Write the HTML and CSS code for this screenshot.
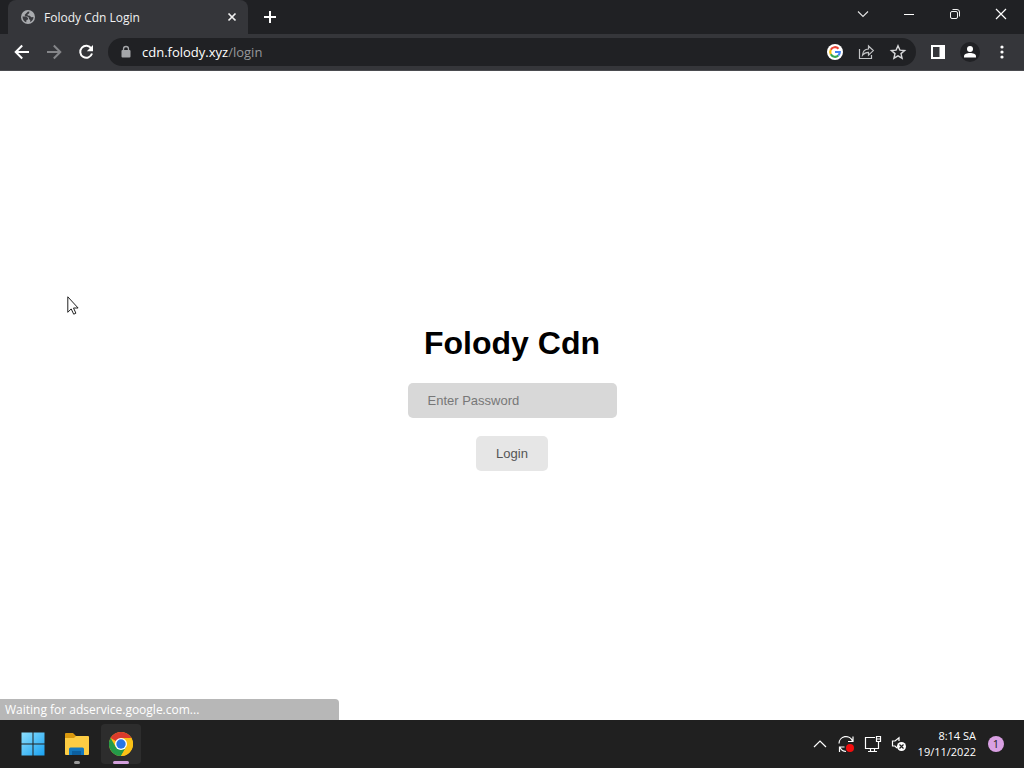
FILE: index.html
```html
<!DOCTYPE html>
<html lang="en">
<head>
<meta charset="utf-8">
<title>Folody Cdn Login</title>
<link rel="stylesheet" href="styles.css">
</head>
<body>
<header class="browser">
  <div class="tabstrip">
    <div class="tab">
      <svg class="favicon" width="16" height="16" viewBox="0 0 16 16"><circle cx="8" cy="8" r="7" fill="#a9abae"/><path d="M2.500 7.500l3.500 0 2 1.500 0 1.500-1.500.5-.3 2.200C4 12.500 2.500 10.500 2.500 7.500zM8 2.500l1.500.3-.5 1.700-1.500.8.3 1.200 2 .3 1.500 1.500 2.200-.3c0 2.300-1.300 4.200-3.500 5l.3-2-1.500-1 .3-1.300-1.800-1.200-1.800-.2L4.500 6z" fill="#3a3b3f"/></svg>
      <span class="tab-title">Folody Cdn Login</span>
      <button class="icon-button tab-close" aria-label="Close tab"><svg width="16" height="16" viewBox="0 0 16 16" stroke="#f1f1f1" stroke-width="1.700"><path d="m4.500 4.500 7 7M11.500 4.500l-7 7"/></svg></button>
    </div>
    <button class="icon-button new-tab" aria-label="New tab"><svg width="16" height="16" viewBox="0 0 16 16" stroke="#fff" stroke-width="2"><path d="M8 2v12M2 8h12"/></svg></button>
    <div class="window-controls">
      <button class="icon-button" aria-label="Search tabs"><svg width="16" height="16" viewBox="0 0 16 16" fill="none" stroke="#e4e4e4" stroke-width="1.100"><path d="m3 5.500 5 5 5-5"/></svg></button>
      <button class="icon-button" aria-label="Minimize"><svg width="16" height="16" viewBox="0 0 16 16" fill="none" stroke="#fff"><path d="M3 8.500h10"/></svg></button>
      <button class="icon-button" aria-label="Restore"><svg width="16" height="16" viewBox="0 0 16 16" fill="none" stroke="#f1f1f1"><rect x="3.500" y="5.500" width="7" height="7" rx="1.500"/><path d="M5.500 3.500H10A2.500 2.500 0 0 1 12.500 6v4.500"/></svg></button>
      <button class="icon-button" aria-label="Close"><svg width="16" height="16" viewBox="0 0 16 16" fill="none" stroke="#fff" stroke-width="1.200"><path d="m3 3 10 10M13 3 3 13"/></svg></button>
    </div>
  </div>
  <div class="toolbar">
    <button class="icon-button" aria-label="Back"><svg width="20" height="20" viewBox="0 0 20 20" fill="none" stroke="#fff" stroke-width="2"><path d="M17 10H4M10.200 3.500 3.700 10l6.500 6.500"/></svg></button>
    <button class="icon-button" aria-label="Forward"><svg width="20" height="20" viewBox="0 0 20 20" fill="none" stroke="#858689" stroke-width="2"><path d="M3 10h13M9.800 3.500l6.500 6.500-6.500 6.500"/></svg></button>
    <button class="icon-button" aria-label="Reload"><svg width="20" height="20" viewBox="0 0 20 20"><path d="M15.300 6.500A6 6 0 1 0 16 11.500" fill="none" stroke="#fff" stroke-width="2"/><path d="M17 3v6.200h-6.200z" fill="#fff"/></svg></button>
    <div class="omnibox">
      <svg width="12" height="14" viewBox="0 0 12 14"><rect x="1.500" y="5" width="9" height="7.500" rx="1" fill="#a5a7aa"/><path d="M3.500 5.500V4a2.500 2.500 0 0 1 5 0v1.500" fill="none" stroke="#a5a7aa" stroke-width="1.300"/></svg>
      <span class="url">cdn.folody.xyz<span class="url-path">/login</span></span>
      <div class="omnibox-actions">
        <button class="icon-button" aria-label="Search with Google"><svg width="16" height="16" viewBox="0 0 16 16"><circle cx="8" cy="8" r="8" fill="#fff"/><g fill="none" stroke-width="2.200"><path d="M11.500 4.700A4.800 4.800 0 0 0 3.800 5.700" stroke="#ea4335"/><path d="M3.800 5.700a4.800 4.800 0 0 0 0 4.600" stroke="#fbbc05"/><path d="M3.800 10.300a4.800 4.800 0 0 0 7.500 1.200" stroke="#34a853"/><path d="M8 8h4.800A4.800 4.800 0 0 1 11.300 11.500" stroke="#4285f4"/></g></svg></button>
        <button class="icon-button" aria-label="Share"><svg width="18" height="18" viewBox="0 0 18 18" fill="none" stroke="#c2c3c5" stroke-width="1.200"><path d="M2.500 6v9.500h12V12"/><path d="M5.500 12.200c.3-4 2.500-6 6-6.200V3l4.800 4.600-4.800 4.600V9.300c-2.700 0-4.500.900-6 2.900z"/></svg></button>
        <button class="icon-button" aria-label="Bookmark"><svg width="18" height="18" viewBox="0 0 18 18" fill="none" stroke="#d7d8da" stroke-width="1.400"><path d="m9 2.800 1.900 4.300 4.700.4-3.600 3.100 1.100 4.600L9 12.800l-4.100 2.400L6 10.600 2.400 7.500l4.700-.4z"/></svg></button>
      </div>
    </div>
    <button class="icon-button" aria-label="Side panel"><svg width="16" height="16" viewBox="0 0 16 16"><path d="M1 1h14v14H1zM3 3v10h6.500V3z" fill="#fff" fill-rule="evenodd"/></svg></button>
    <button class="icon-button profile" aria-label="Profile"><svg width="16" height="16" viewBox="0 0 16 16" fill="#fff"><circle cx="8" cy="5" r="3"/><path d="M2 13.500v-1.200C2 10 5 9 8 9s6 1 6 3.300v1.200z"/></svg></button>
    <button class="icon-button" aria-label="Menu"><svg width="16" height="16" viewBox="0 0 16 16" fill="#fff"><circle cx="8" cy="3" r="1.600"/><circle cx="8" cy="8" r="1.600"/><circle cx="8" cy="13" r="1.600"/></svg></button>
  </div>
</header>
<main class="page">
  <form class="login">
    <h1 class="heading">Folody Cdn</h1>
    <input class="password" type="password" placeholder="Enter Password" aria-label="Enter Password">
    <button class="submit" type="button">Login</button>
  </form>
  <svg class="pointer" width="13" height="20" viewBox="0 0 13 20"><path d="M.8.800v15.500l3.400-3.400 2.500 5.300 2.200-1-2.400-5.200h4.600z" fill="#fff" stroke="#222"/></svg>
  <div class="status">Waiting for adservice.google.com...</div>
</main>
<footer class="taskbar">
  <div class="apps">
    <button class="app" aria-label="Start"><svg width="24" height="24" viewBox="0 0 24 24"><defs><linearGradient id="win" x1="0" y1="0" x2="24" y2="24" gradientUnits="userSpaceOnUse"><stop stop-color="#8fe0fd"/><stop offset="1" stop-color="#16a0f2"/></linearGradient></defs><path d="M.5.500h11v11H.5zM12.500.500h11v11h-11zM.5 12.500h11v11H.5zM12.500 12.500h11v11h-11z" fill="url(#win)"/></svg></button>
    <button class="app open" aria-label="File Explorer"><svg width="26" height="24" viewBox="0 0 26 24"><path d="M1 2q0-1 1-1h7l3 3v5H1z" fill="#d9980e"/><path d="M1 6h9l2-2h12q1 0 1 1v17q0 1-1 1H2q-1 0-1-1z" fill="#fccc43"/><path d="M5 23v-6q0-1.500 1.500-1.500h12Q20 15.500 20 17v6z" fill="#1478bd"/><path d="M8 19h9v4H8z" fill="#0c5f9f"/></svg></button>
    <button class="app active" aria-label="Google Chrome"><svg width="24" height="24" viewBox="0 0 24 24"><circle cx="12" cy="12" r="12" fill="#fbc116"/><path d="M12 12 1.600 6A12 12 0 0 1 22.400 6H12z" fill="#db3b2c"/><path d="M1.600 6A12 12 0 0 0 12 24l5.200-9L12 12l-5.200 3z" fill="#249a49"/><path d="M12 6h10.400A12 12 0 0 1 12 24l5.200-9z" fill="#fbc116"/><circle cx="12" cy="12" r="6" fill="#fff"/><circle cx="12" cy="12" r="4.700" fill="#2875e6"/></svg></button>
  </div>
  <div class="tray">
    <button class="icon-button" aria-label="Show hidden icons"><svg width="16" height="16" viewBox="0 0 16 16" fill="none" stroke="#fff" stroke-width="1.200"><path d="m2 11 6-6 6 6"/></svg></button>
    <button class="icon-button" aria-label="Updates"><svg width="18" height="18" viewBox="0 0 18 18" fill="none" stroke="#fff" stroke-width="1.200"><path d="M2 8.500A7 7 0 0 1 15.500 6M16 1.500V6.500h-5M2.500 17v-5h5M3 12.500a7 7 0 0 0 6 4"/><circle cx="13" cy="13" r="4" fill="#f20d0d" stroke="none"/></svg></button>
    <button class="icon-button" aria-label="Network"><svg width="18" height="18" viewBox="0 0 18 18" fill="none" stroke="#fff" stroke-width="1.200"><path d="M11 2.500H1.500v11h13V9M4 16.500h9M6.500 13.500v3M10.500 13.500v3M12.500 1.500h4v5h-4zM14.500 6.500V9M12.500 4h4"/></svg></button>
    <button class="icon-button" aria-label="Sound muted"><svg width="16" height="16" viewBox="0 0 16 16"><path d="M8 5V1.700L4 5H1.500v5H4l2 2" fill="none" stroke="#fff" stroke-width="1.200"/><circle cx="10.500" cy="10.500" r="4.500" fill="#fff"/><path d="m8.500 8.500 4 4m0-4-4 4" stroke="#202020" stroke-width="1.200"/></svg></button>
    <div class="clock"><time>8:14 SA</time><time>19/11/2022</time></div>
    <span class="badge">1</span>
  </div>
</footer>
</body>
</html>
```
FILE: styles.css
```css
* { box-sizing: border-box; }

body {
  margin: 0;
  min-height: 100vh;
  display: flex;
  flex-direction: column;
  background: #fff;
  font-family: "Open Sans", "Noto Sans", sans-serif;
}

button, input { border: 0; margin: 0; }
svg { display: block; flex: none; }

.icon-button {
  display: flex;
  align-items: center;
  justify-content: center;
  padding: 0;
  background: none;
}

.browser { background: #202124; }

.tabstrip {
  display: flex;
  align-items: center;
  height: 34px;
  padding-left: 8px;
}

.tab {
  display: flex;
  align-items: center;
  gap: 8px;
  width: 240px;
  height: 34px;
  padding: 0 8px 0 12px;
  border-radius: 8px 8px 0 0;
  background: #35363a;
  color: #f1f1f1;
  font-size: 12px;
}

.tab-title { flex: 1; }
.new-tab { margin-left: 14px; }

.window-controls {
  display: flex;
  margin-left: auto;
  height: 28px;
  align-self: flex-start;
}

.window-controls .icon-button { width: 46px; }

.toolbar {
  display: flex;
  align-items: center;
  gap: 12px;
  height: 37px;
  padding: 0 12px;
  border-bottom: 1px solid #4a4b4f;
  background: #35363a;
}

.omnibox {
  flex: 1;
  display: flex;
  align-items: center;
  gap: 10px;
  height: 28px;
  padding: 0 9px 0 12px;
  border-radius: 14px;
  background: #202124;
}

.url {
  color: #fff;
  font-size: 13px;
}

.url-path { color: #96989b; }

.omnibox-actions {
  display: flex;
  align-items: center;
  gap: 14px;
  margin-left: auto;
}

.toolbar > .icon-button:nth-last-child(-n+3) { width: 20px; height: 20px; }
.profile { border-radius: 50%; background: #202124; }

.page {
  position: relative;
  flex: 1;
  display: flex;
  align-items: center;
  justify-content: center;
  padding-top: 4px;
  font-family: "Liberation Sans", Arial, sans-serif;
}

.login {
  display: flex;
  flex-direction: column;
  align-items: center;
  gap: 18px;
}

.heading {
  margin: 0 0 4px;
  font-size: 32px;
  line-height: 36px;
}

.password, .submit {
  height: 35px;
  padding: 0 20px;
  border-radius: 5px;
  font-family: inherit;
  font-size: 13px;
}

.password {
  width: 209px;
  background: #d8d8d8;
}

.password::placeholder { color: #777; }

.submit {
  width: 72px;
  background: #e6e6e6;
  color: #555;
}

.pointer {
  position: absolute;
  left: 67px;
  top: 225px;
}

.status {
  position: absolute;
  left: 0;
  bottom: 0;
  width: 339px;
  height: 21px;
  padding-left: 5px;
  border-radius: 0 4px 0 0;
  background: #b7b7b7;
  color: #fff;
  font-family: "Open Sans", "Noto Sans", sans-serif;
  font-size: 12px;
  line-height: 21px;
}

.taskbar {
  display: flex;
  justify-content: space-between;
  height: 48px;
  background: #202020;
  color: #fff;
}

.apps {
  display: flex;
  align-items: center;
  gap: 4px;
  padding-left: 13px;
}

.app {
  position: relative;
  display: flex;
  align-items: center;
  justify-content: center;
  width: 40px;
  height: 40px;
  padding: 0;
  border-radius: 4px;
  background: none;
}

.app.active { background: #2d2d2d; }

.app.open::after, .app.active::after {
  content: "";
  position: absolute;
  bottom: 0;
  width: 6px;
  height: 3px;
  border-radius: 2px;
  background: #999;
}

.app.active::after {
  width: 16px;
  background: #d3a0dc;
}

.tray {
  display: flex;
  align-items: center;
  gap: 9px;
  padding-right: 20px;
}

.clock {
  display: flex;
  flex-direction: column;
  margin: 0 3px 0 2px;
  font-size: 11px;
  line-height: 16px;
  text-align: right;
}

.badge {
  width: 16px;
  height: 16px;
  border-radius: 50%;
  background: #d9a0e3;
  color: #202020;
  font-size: 11px;
  line-height: 16px;
  text-align: center;
}
```
